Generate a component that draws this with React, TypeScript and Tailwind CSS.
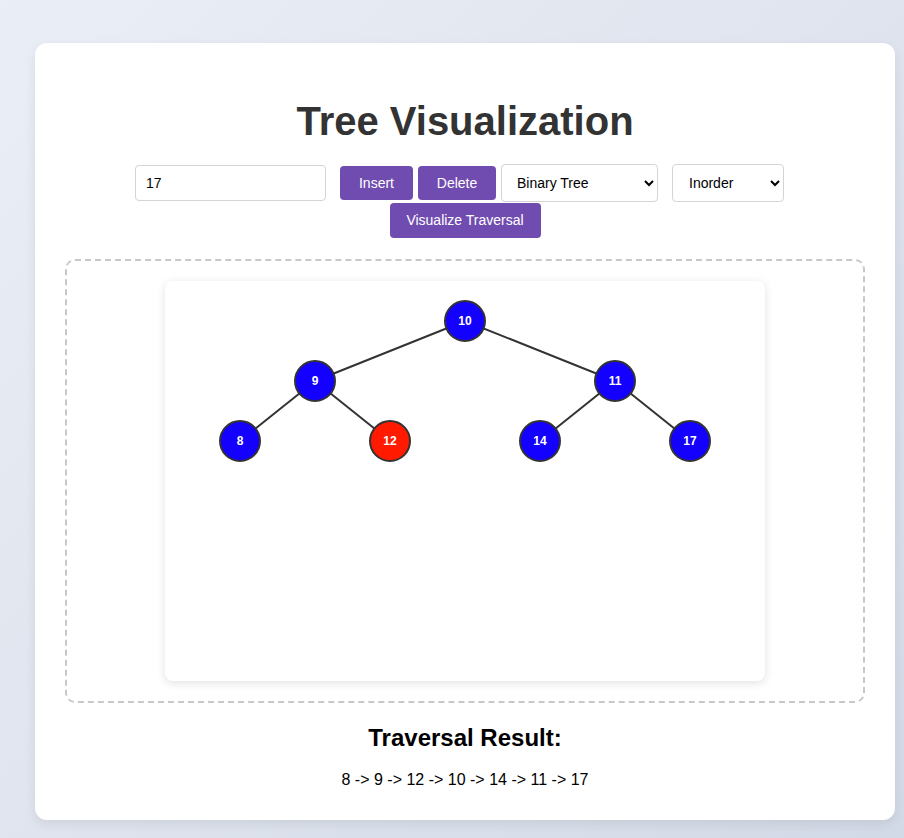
import { useState } from 'react';

type Node = { v: number; x: number; y: number; red?: boolean };

const nodes: Node[] = [
  { v: 10, x: 300, y: 40 },
  { v: 9, x: 150, y: 100 },
  { v: 11, x: 450, y: 100 },
  { v: 8, x: 75, y: 160 },
  { v: 12, x: 225, y: 160, red: true },
  { v: 14, x: 375, y: 160 },
  { v: 17, x: 525, y: 160 },
];

const edges: [number, number][] = [
  [0, 1], [0, 2], [1, 3], [1, 4], [2, 5], [2, 6],
];

export default function App() {
  const [value, setValue] = useState('17');

  return (
    <div
      className="min-h-[838px] w-full bg-[linear-gradient(135deg,#eaeef6_0%,#dfe4ee_50%,#d3dae7_100%)] pt-[43px] pb-[18px]"
      style={{ fontFamily: '"Liberation Sans", Arial, sans-serif' }}
    >
      <div className="ml-[35px] w-[860px] rounded-xl bg-white px-[30px] pt-[55px] pb-[31px] shadow-[0_4px_12px_rgba(0,0,0,0.08)]">
        {/* Title */}
        <h1 className="h-[46px] text-center text-[40px] font-bold leading-[46px] text-[#333]">
          Tree Visualization
        </h1>

        {/* Controls */}
        <div className="mt-[20px] flex h-[38px] items-center justify-center pr-[11px]">
          <input
            value={value}
            onChange={e => setValue(e.target.value)}
            className="h-[36px] w-[191px] rounded border border-[#d4d4d4] px-[10px] text-[14px] text-black outline-none"
          />
          <button className="ml-[14px] h-[34px] w-[73px] rounded bg-[#714cb0] text-[14px] text-white">
            Insert
          </button>
          <button className="ml-[5px] h-[34px] w-[78px] rounded bg-[#714cb0] text-[14px] text-white">
            Delete
          </button>
          <select className="ml-[5px] h-[38px] w-[157px] rounded border border-[#d4d4d4] bg-white pl-[11px] pr-[4px] text-[14px] text-black">
            <option>Binary Tree</option>
            <option>Binary Search Tree</option>
          </select>
          <select className="ml-[14px] h-[38px] w-[112px] rounded border border-[#d4d4d4] bg-white pl-[12px] pr-[4px] text-[14px] text-black">
            <option>Inorder</option>
            <option>Preorder</option>
            <option>Postorder</option>
          </select>
        </div>
        <div className="mt-[1px] flex justify-center">
          <button className="h-[35px] w-[151px] rounded bg-[#714cb0] text-[14px] text-white">
            Visualize Traversal
          </button>
        </div>

        {/* Canvas */}
        <div className="mt-[21px] flex h-[444px] justify-center rounded-[10px] border-2 border-dashed border-[#c8c8c8] p-[20px]">
          <svg
            width="600"
            height="400"
            className="rounded-lg bg-white shadow-[0_2px_10px_rgba(0,0,0,0.12)]"
          >
            {edges.map(([a, b]) => (
              <line
                key={`${a}-${b}`}
                x1={nodes[a].x}
                y1={nodes[a].y}
                x2={nodes[b].x}
                y2={nodes[b].y}
                stroke="#333"
                strokeWidth="2"
              />
            ))}
            {nodes.map(n => (
              <g key={n.v}>
                <circle cx={n.x} cy={n.y} r="20" fill={n.red ? '#ff1a00' : '#1400ff'} stroke="#333" strokeWidth="2" />
                <text
                  x={n.x}
                  y={n.y}
                  dy="0.35em"
                  textAnchor="middle"
                  fill="white"
                  fontSize="12"
                  fontWeight="bold"
                  fontFamily='"Liberation Sans", Arial, sans-serif'
                >
                  {n.v}
                </text>
              </g>
            ))}
          </svg>
        </div>

        {/* Result */}
        <h2 className="mt-[21px] text-center text-[24px] font-bold leading-[28px] text-black">
          Traversal Result:
        </h2>
        <p className="mt-[19px] text-center text-[16px] leading-[18px] text-black">
          8 -&gt; 9 -&gt; 12 -&gt; 10 -&gt; 14 -&gt; 11 -&gt; 17
        </p>
      </div>
    </div>
  );
}
